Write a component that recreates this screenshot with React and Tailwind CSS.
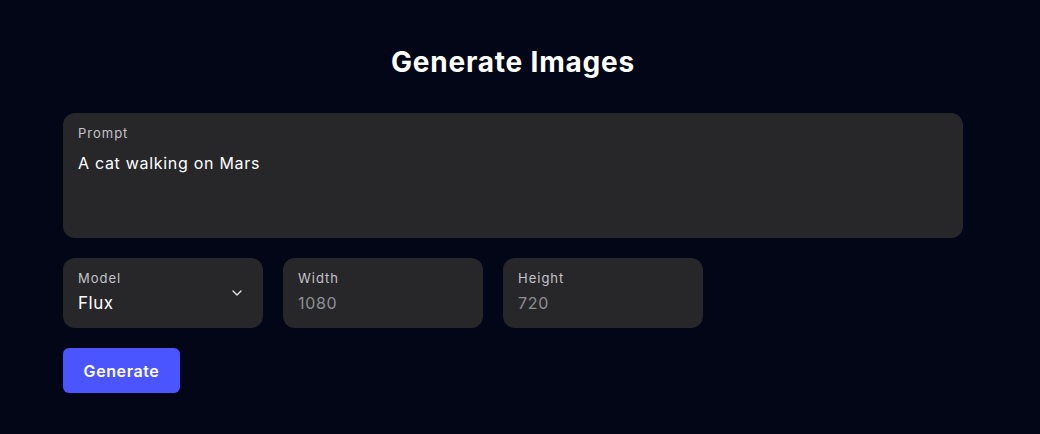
import { useState } from 'react'
import { ChevronDown } from 'lucide-react'

export default function App() {
  const [prompt, setPrompt] = useState('A cat walking on Mars')
  const [model, setModel] = useState('Flux')
  const [width, setWidth] = useState('')
  const [height, setHeight] = useState('')

  return (
    <div
      className="min-h-[434px] w-full bg-[#020617] text-white"
      style={{ fontFamily: 'Inter, "Noto Sans", sans-serif' }}
    >
      <div className="w-[900px] ml-[63px] pt-[44px]">
        <h1 className="text-center text-[28px] leading-9 font-bold tracking-[0.8px] mb-[33px]">
          Generate Images
        </h1>

        <div className="h-[125px] rounded-xl bg-[#27272a] px-[15px] pt-[10px] flex flex-col">
          <label className="text-[13px] leading-5 tracking-[1px] text-[#c4c4c8]">Prompt</label>
          <textarea
            value={prompt}
            onChange={(e) => setPrompt(e.target.value)}
            className="mt-2 flex-1 resize-none bg-transparent text-[16px] leading-6 tracking-[0.7px] text-white outline-none"
          />
        </div>

        <div className="mt-5 flex gap-5">
          <div className="relative w-[200px] h-[70px] rounded-xl bg-[#27272a] px-[15px] pt-[10px]">
            <label className="block text-[13px] leading-5 tracking-[1px] text-[#c4c4c8]">Model</label>
            <select
              value={model}
              onChange={(e) => setModel(e.target.value)}
              className="mt-[3px] w-full appearance-none bg-transparent text-[17px] leading-6 tracking-[0.5px] text-white outline-none"
            >
              <option className="bg-[#27272a]">Flux</option>
            </select>
            <ChevronDown
              size={16}
              strokeWidth={2}
              className="absolute right-[18px] top-[27px] text-[#e5e5e5] pointer-events-none"
            />
          </div>

          <div className="w-[200px] h-[70px] rounded-xl bg-[#27272a] px-[15px] pt-[10px]">
            <label className="block text-[13px] leading-5 tracking-[1px] text-[#c4c4c8]">Width</label>
            <input
              value={width}
              onChange={(e) => setWidth(e.target.value)}
              placeholder="1080"
              className="mt-[3px] w-full bg-transparent text-[16px] leading-6 tracking-[0.7px] text-white placeholder:text-[#8e8e93] outline-none"
            />
          </div>

          <div className="w-[200px] h-[70px] rounded-xl bg-[#27272a] px-[15px] pt-[10px]">
            <label className="block text-[13px] leading-5 tracking-[1px] text-[#c4c4c8]">Height</label>
            <input
              value={height}
              onChange={(e) => setHeight(e.target.value)}
              placeholder="720"
              className="mt-[3px] w-full bg-transparent text-[16px] leading-6 tracking-[0.7px] text-white placeholder:text-[#8e8e93] outline-none"
            />
          </div>
        </div>

        <button className="mt-5 h-[45px] w-[117px] rounded-md bg-[#4a55ff] text-[16px] font-semibold tracking-[0.6px] text-white">
          Generate
        </button>
      </div>
    </div>
  )
}
